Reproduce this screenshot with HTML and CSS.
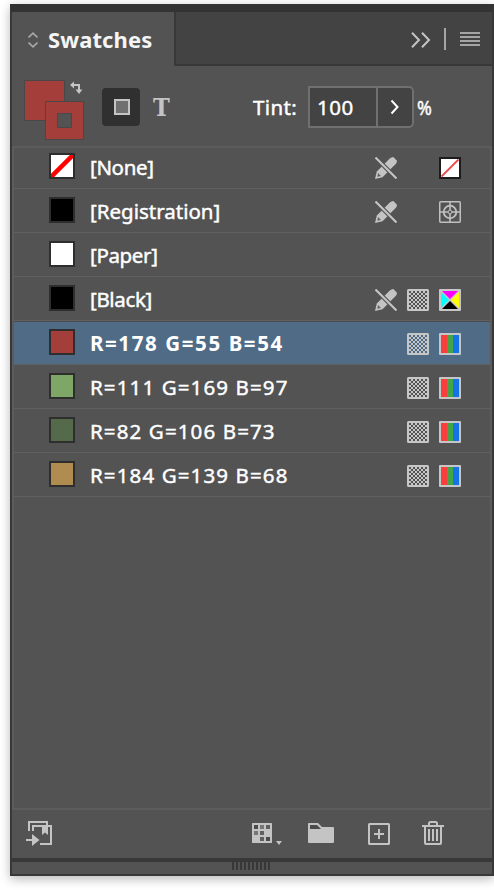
FILE: index.html
```html
<!DOCTYPE html>
<html lang="en">
<head>
<meta charset="utf-8">
<title>Swatches</title>
<link rel="stylesheet" href="styles.css">
</head>
<body>
<svg class="defs" width="0" height="0">
  <defs>
    <pattern id="checker" width="4" height="4" patternUnits="userSpaceOnUse" x="2" y="2">
      <path fill="#c6c6c6" d="M2 0h2v2H2zM0 2h2v2H0z"/>
    </pattern>
    <symbol id="locked" viewBox="0 0 22 22">
      <path fill="#c4c4c4" d="M0 22 1.800 14.500 14.800 1.500Q16.500 0 18.300 0L22 3.700Q22 5.500 20.700 7L7.500 20.200Z"/>
      <path fill="#606060" d="m2.300 19.700.800-3.600 2.800 2.800z"/>
      <path stroke="#535353" stroke-width="4.400" d="m1 1 20 20"/>
      <path stroke="#c4c4c4" stroke-width="2.100" d="M.500.500 21.500 21.500"/>
    </symbol>
    <symbol id="tint" viewBox="0 0 22 22">
      <rect x="1" y="1" width="20" height="20" rx=".5" fill="none" stroke="#c6c6c6" stroke-width="2"/>
      <rect x="2" y="2" width="18" height="18" fill="url(#checker)"/>
    </symbol>
    <symbol id="rgb" viewBox="0 0 22 22">
      <rect width="22" height="22" rx="1" fill="#c6c6c6"/>
      <path fill="#fa3e3e" d="M2 2h6v18H2z"/><path fill="#43a547" d="M8 2h6v18H8z"/><path fill="#1473e6" d="M14 2h6v18h-6z"/>
    </symbol>
  </defs>
</svg>
<main class="panel">
  <header class="tabs">
    <div class="tab">
      <svg width="10" height="16" viewBox="0 0 10 16" fill="none" stroke="#a8a8a8" stroke-width="1.700"><path d="m.500 5.500 4.500-4.300 4.500 4.300M.500 10.500 5 14.800l4.500-4.300"/></svg>
      <h1>Swatches</h1>
    </div>
    <div class="tab-tools">
      <svg width="20" height="16" viewBox="0 0 20 16" fill="none" stroke="#c4c4c4" stroke-width="2"><path d="m1 .700 7 7.300-7 7.300M11 .700 18 8l-7 7.300"/></svg>
      <span class="divider"></span>
      <svg width="20" height="14" viewBox="0 0 20 14" fill="#a5a5a5"><path d="M0 0h20v2H0zM0 4h20v2H0zM0 8h20v2H0zM0 12h20v2H0z"/></svg>
    </div>
  </header>

  <section class="controls">
    <svg class="proxy" width="60" height="60" viewBox="0 0 60 60">
      <g fill="#a33e3a" stroke="#494747"><path d="M.500.500h40v40H.500z"/><path d="M21.500 21.500h38v38h-38z"/><path fill="#535353" d="M33.500 33.500h14v14h-14z"/></g>
      <path fill="none" stroke="#c4c4c4" stroke-width="2" d="M48 5h7v6"/>
      <path fill="#c4c4c4" d="m46 5 4-3.500v7zM51.500 9.500h7L55 14z"/>
    </svg>
    <button class="container-mode" aria-label="Formatting affects container"><span></span></button>
    <span class="text-mode">T</span>
    <label class="tint-label">Tint:</label>
    <div class="tint-field">
      <span class="tint-value">100</span>
      <span class="tint-step"><svg width="10" height="16" viewBox="0 0 10 16" fill="none" stroke="#fff" stroke-width="2"><path d="m1.500 1.500 6 6.500-6 6.500"/></svg></span>
    </div>
    <span class="percent">%</span>
  </section>

  <ul class="list">
    <li class="row">
      <span class="chip"><svg width="22" height="22"><path fill="#fff" d="M0 0h22v22H0z"/><path stroke="#f00" stroke-width="4.500" d="M-1 23 23-1"/></svg></span>
      <span class="name tight">[None]</span>
      <svg class="icon c1"><use href="#locked"/></svg>
      <svg class="icon c3" viewBox="0 0 22 22"><path fill="#fff" stroke="#1c1c1c" stroke-width="2" d="M1 1h20v20H1z"/><path stroke="#e84c4c" stroke-width="1.800" d="M2.500 19.500 19.500 2.500"/></svg>
    </li>
    <li class="row">
      <span class="chip black"></span>
      <span class="name">[Registration]</span>
      <svg class="icon c1"><use href="#locked"/></svg>
      <svg class="icon c3" viewBox="0 0 22 22" fill="none" stroke="#c0c0c0"><rect x=".75" y=".75" width="20.500" height="20.500" rx="1" stroke-width="1.500"/><circle cx="11" cy="11" r="6.300" stroke-width="1.800"/><path stroke-width="1.600" d="M11 1v20M1 11h20"/><circle cx="11" cy="11" r="1.900" fill="#535353" stroke-width="1"/></svg>
    </li>
    <li class="row">
      <span class="chip white"></span>
      <span class="name tight">[Paper]</span>
    </li>
    <li class="row">
      <span class="chip black"></span>
      <span class="name tight">[Black]</span>
      <svg class="icon c1"><use href="#locked"/></svg>
      <svg class="icon"><use href="#tint"/></svg>
      <svg class="icon c3" viewBox="0 0 22 22"><rect width="22" height="22" rx="1" fill="#c6c6c6"/><path fill="#f0f" d="M3 2h16l-8 8z"/><path fill="#0ff" d="M2 3v16l8-8z"/><path fill="#ff0" d="M20 3v16l-8-8z"/><path d="M3 20h16l-8-8z"/></svg>
    </li>
    <li class="row selected">
      <span class="chip red"></span>
      <span class="name">R=178 G=55 B=54</span>
      <svg class="icon"><use href="#tint"/></svg>
      <svg class="icon c3"><use href="#rgb"/></svg>
    </li>
    <li class="row">
      <span class="chip green"></span>
      <span class="name rgb-name">R=111 G=169 B=97</span>
      <svg class="icon"><use href="#tint"/></svg>
      <svg class="icon c3"><use href="#rgb"/></svg>
    </li>
    <li class="row">
      <span class="chip forest"></span>
      <span class="name rgb-name">R=82 G=106 B=73</span>
      <svg class="icon"><use href="#tint"/></svg>
      <svg class="icon c3"><use href="#rgb"/></svg>
    </li>
    <li class="row">
      <span class="chip ochre"></span>
      <span class="name rgb-name">R=184 G=139 B=68</span>
      <svg class="icon"><use href="#tint"/></svg>
      <svg class="icon c3"><use href="#rgb"/></svg>
    </li>
  </ul>

  <footer class="actions">
    <svg class="load" width="26" height="26" viewBox="0 0 26 26" fill="none" stroke="#c4c4c4" stroke-width="2"><path d="M3 10V1h18v4"/><path d="M7 10V5h18v18H14"/><path fill="#c4c4c4" stroke="none" d="M16 5h6v9l-3-2.500-3 2.500zM6 13l7.500 6L6 25z"/><path d="M0 19h8"/></svg>
    <svg class="groups" width="30" height="22" viewBox="0 0 30 22"><rect width="20" height="20" rx=".5" fill="#c4c4c4"/><path fill="#4b4b4b" d="M2 2h4v4H2zM14 14h4v4h-4z"/><path fill="#777" d="M8 2h4v4H8zM2 8h4v4H2z"/><path fill="#606060" d="M14 2h4v4h-4zM8 8h4v4H8zM8 14h4v4H8z"/><path fill="#c4c4c4" d="M24 18h6l-3 4z"/></svg>
    <svg class="folder" width="26" height="20" viewBox="0 0 26 20"><path fill="#c4c4c4" d="M0 1q0-1 1-1h9l4 4h11q1 0 1 1v14q0 1-1 1H1q-1 0-1-1z"/><path fill="#4b4b4b" d="M2 2h7l4 4H2z"/></svg>
    <svg class="add" width="22" height="22" viewBox="0 0 22 22" fill="none" stroke="#c4c4c4" stroke-width="2"><rect x="1" y="1" width="20" height="20" rx=".5"/><path d="M11 6v10M6 11h10"/></svg>
    <svg class="trash" width="22" height="24" viewBox="0 0 22 24" fill="none" stroke="#c4c4c4" stroke-width="2"><path d="M0 5h22M7 4V2.500Q7 1 8.500 1h5Q15 1 15 2.500V4M3 6v16q0 1 1 1h14q1 0 1-1V6M7 8v12M11 8v12M15 8v12"/></svg>
  </footer>
  <div class="resize"><span class="grip"></span></div>
</main>
</body>
</html>
```

FILE: styles.css
```css
* { box-sizing: border-box; }
body {
  margin: 0;
  height: 890px;
  padding: 4px 0 0 10px;
  overflow: hidden;
  background: #fff;
  color: #fff;
  font: 20.5px/28px "Noto Sans", "Open Sans", sans-serif;
}
svg { display: block; flex: none; }
.defs { position: absolute; }
.panel {
  width: 484px;
  height: 872px;
  border: solid #383838;
  border-width: 8px 2px 2px;
  border-top-color: #333;
  background: #535353;
  box-shadow: 0 3px 10px rgba(0, 0, 0, .28);
  display: flex;
  flex-direction: column;
}
.tabs { height: 54px; display: flex; flex: none; }
.tab {
  width: 162px;
  padding: 2px 0 0 16px;
  display: flex;
  align-items: center;
  gap: 10px;
}
.tab h1 { margin: -2px 0 0; font-size: 22px; font-weight: 700; letter-spacing: .1px; color: #f5f5f5; }
.tab-tools {
  flex: 1;
  display: flex;
  align-items: center;
  justify-content: flex-end;
  padding: 2px 12px 0 0;
  background: #434343;
  border-left: 2px solid #383838;
  border-bottom: 2px solid #383838;
}
.tab-tools svg:first-child { margin-top: 2px; }
.divider { width: 2px; height: 22px; background: #a5a5a5; margin: 0 14px 0 13px; }
.controls { height: 80px; display: flex; align-items: center; padding-left: 12px; flex: none; }
.proxy { margin-top: 8px; }
.container-mode {
  width: 38px;
  height: 38px;
  margin: 2px 0 0 18px;
  padding: 0 0 0 2px;
  border: 0;
  border-radius: 4px;
  background: #303030;
  display: flex;
  align-items: center;
  justify-content: center;
}
.container-mode span { width: 16px; height: 16px; border: 2px solid #c4c4c4; background: #707070; }
.text-mode { width: 22px; margin: 3px 0 0 13px; color: #c4c4c4; font: 700 25px/30px "DejaVu Serif Condensed", "DejaVu Serif", serif; }
.tint-label { width: 55px; margin: 1px 0 0 78px; letter-spacing: .4px; -webkit-text-stroke: .45px #fff; }
.tint-field {
  width: 106px;
  height: 42px;
  margin-top: 2px;
  border: 2px solid #707070;
  border-radius: 1px 5px 5px 1px;
  background: #434343;
  display: flex;
}
.tint-value { width: 66px; padding: 5px 0 0 7px; letter-spacing: .5px; -webkit-text-stroke: .45px #fff; }
.tint-step { flex: 1; border-left: 2px solid #707070; display: flex; align-items: center; justify-content: center; }
.percent { margin: 1px 0 0 3px; -webkit-text-stroke: .45px #fff; transform: scaleX(.87); transform-origin: left; }
.list {
  flex: none;
  height: 664px;
  margin: 0;
  padding: 0;
  list-style: none;
  border: 2px solid #5c5c5c;
}
.row {
  height: 44px;
  padding: 0 29px 9px 35px;
  display: flex;
  align-items: flex-end;
  border-bottom: 1px solid #606060;
}
.row:first-child { height: 41px; }
.selected { background: #4f6b85; border-top: 1px solid #494b4d; font-weight: 700; }
.chip { width: 26px; height: 26px; border: 2px solid #2e2e2e; flex: none; }
.black { background: #000; }
.white { background: #fff; }
.red { background: #a33e3a; }
.green { background: #7da667; }
.forest { background: #556a4b; }
.ochre { background: #b08c50; }
.name { flex: 1; margin: 0 0 -2px 15px; white-space: nowrap; -webkit-text-stroke: .45px #fff; }
.tight { letter-spacing: -.35px; }
.rgb-name { letter-spacing: 1.12px; }
.selected .name { letter-spacing: 1.6px; -webkit-text-stroke: 0; }
.icon { width: 22px; height: 22px; margin-left: 10px; }
.row .c1:has(+ .c3) { margin-right: 32px; }
.row .c1 + .c3 { margin-left: 0; }
.row .c1:has(+ .c3) { margin-right: 42px; }
.actions { flex: 1; display: flex; align-items: flex-start; padding: 11px 0 0 14px; }
.groups { margin: 2px 0 0 200px; }
.folder { margin: 2px 0 0 26px; }
.add { margin: 2px 0 0 34px; }
.trash { margin: 0 0 0 32px; }
.resize { height: 16px; flex: none; border-top: 4px solid #383838; display: flex; padding-left: 220px; }
.grip { width: 38px; height: 8px; background: repeating-linear-gradient(90deg, #383838 0 2px, transparent 2px 4px); }
```
